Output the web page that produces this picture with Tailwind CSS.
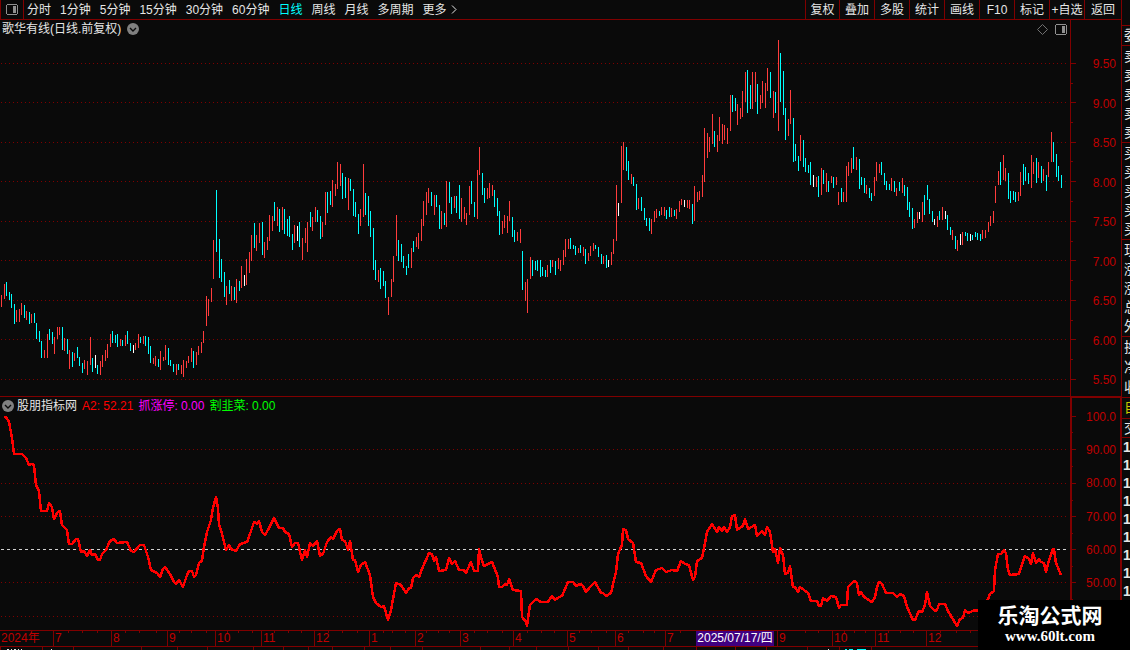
<!DOCTYPE html>
<html lang="zh-CN">
<head>
  <meta charset="UTF-8">
  <title>歌华有线 日线</title>
  <script src="https://cdn.jsdelivr.net/npm/@tailwindcss/browser@4"></script>
</head>
<body class="bg-[#0a0a0a] text-[#e6e6e6] text-[12px] leading-[18px] font-['Liberation_Sans','Noto_Sans_CJK_SC',sans-serif] overflow-hidden">
  <div class="flex h-screen">
    <main class="flex-1 min-w-0 grid grid-rows-[20px_376fr_234fr_17px_3px]">

      <!-- toolbar -->
      <nav class="flex justify-between border-b border-[#800000] whitespace-nowrap">
        <div class="flex">
          <button aria-label="侧栏" class="w-6 border-x border-[#800000] flex items-center justify-center">
            <svg width="12" height="11" viewBox="0 0 12 11" shape-rendering="crispEdges"><path d="M1 .5h10M1 10.5h10M.5 1v9M11.5 1v9" stroke="#909090"/><path d="M7 2h3v7H7z" fill="#909090"/></svg>
          </button>
          <div class="flex gap-[9px] pl-[3px]">
            <button>分时</button>
            <button>1分钟</button>
            <button>5分钟</button>
            <button>15分钟</button>
            <button>30分钟</button>
            <button>60分钟</button>
            <button class="text-[#00ffff]">日线</button>
            <button>周线</button>
            <button>月线</button>
            <button>多周期</button>
            <button class="flex items-center gap-1">更多
              <svg width="6" height="9" viewBox="0 0 6 9" fill="none" stroke="#e6e6e6"><path d="M1 .5l4 4-4 4"/></svg>
            </button>
          </div>
        </div>
        <div class="flex">
          <button class="w-[34px] border-l border-[#800000]">复权</button>
          <button class="w-[35px] border-l border-[#800000]">叠加</button>
          <button class="w-[35px] border-l border-[#800000]">多股</button>
          <button class="w-[35px] border-l border-[#800000]">统计</button>
          <button class="w-[35px] border-l border-[#800000]">画线</button>
          <button class="w-[35px] border-l border-[#800000]">F10</button>
          <button class="w-[35px] border-l border-[#800000]">标记</button>
          <button class="w-[35px] border-l border-[#800000]">+自选</button>
          <button class="w-[37px] border-l border-[#800000]">返回</button>
        </div>
      </nav>

      <!-- price pane -->
      <section class="relative flex min-h-0">
        <svg id="price" class="flex-1 min-w-0 h-full" viewBox="0 20 1070 376" preserveAspectRatio="none" shape-rendering="crispEdges" fill="none">
          <path d="M1 63.5H1068M1 102.5H1068M1 142.5H1068M1 181.5H1068M1 221.5H1068M1 260.5H1068M1 300.5H1068M1 339.5H1068M1 379.5H1068" stroke="#800000" stroke-dasharray="1 3"/>
        </svg>
        <div class="relative w-[51px] border-l border-[#800000]">
          <svg class="absolute inset-0 w-full h-full" viewBox="0 20 50 376" preserveAspectRatio="none" shape-rendering="crispEdges">
            <path d="M0 63.5h5M0 102.5h5M0 142.5h5M0 181.5h5M0 221.5h5M0 260.5h5M0 300.5h5M0 339.5h5M0 379.5h5M0 83.5h2M0 122.5h2M0 161.5h2M0 201.5h2M0 241.5h2M0 280.5h2M0 320.5h2M0 359.5h2" stroke="#800000"/>
          </svg>
          <div class="h-full flex flex-col justify-between items-end pt-[38px] pb-[10px] pr-[5px] leading-3 text-[#c00000]">
            <span>9.50</span><span>9.00</span><span>8.50</span><span>8.00</span><span>7.50</span><span>7.00</span><span>6.50</span><span>6.00</span><span>5.50</span>
          </div>
        </div>
        <div class="absolute left-0 right-[51px] top-0 flex items-center justify-between pl-[2px] pr-[3px]">
          <div class="flex items-center gap-[6px]">
            <h1>歌华有线(日线.前复权)</h1>
            <button aria-label="展开"><svg class="block" width="12" height="12" viewBox="0 0 12 12"><circle cx="6" cy="6" r="6" fill="#808080"/><path d="M3 5l3 3 3-3" fill="none" stroke="#0a0a0a" stroke-width="1.4"/></svg></button>
          </div>
          <div class="flex items-center gap-[7px]">
            <button aria-label="标记点"><svg class="block" width="11" height="11" viewBox="0 0 11 11"><path d="M5.5.5l5 5-5 5-5-5z" fill="none" stroke="#707070"/></svg></button>
            <button aria-label="面板"><svg class="block" width="12" height="11" viewBox="0 0 12 11" shape-rendering="crispEdges"><path d="M1 .5h10M1 10.5h10M.5 1v9M11.5 1v9" stroke="#909090"/><path d="M7 2h3v7H7z" fill="#909090"/></svg></button>
          </div>
        </div>
      </section>

      <!-- indicator pane -->
      <section class="relative flex min-h-0 border-t border-[#800000]">
        <svg class="flex-1 min-w-0 h-full" viewBox="0 397 1070 233" preserveAspectRatio="none" shape-rendering="crispEdges" fill="none">
          <path d="M1 449.5H1068M1 483.5H1068M1 516.5H1068M1 582.5H1068M1 616.5H1068" stroke="#800000" stroke-dasharray="1 3"/>
          <path d="M1 549.5H1066" stroke="#d0d0d0" stroke-dasharray="3 3"/>
          <polyline id="a2" stroke="#ff0000" stroke-width="2.5" stroke-linejoin="round"/>
        </svg>
        <div class="relative w-[51px] border-l-2 border-t border-r border-[#800000]">
          <svg class="absolute inset-0 w-full h-full" viewBox="0 398 48 232" preserveAspectRatio="none" shape-rendering="crispEdges">
            <path d="M0 416.5h4M0 449.5h4M0 483.5h4M0 516.5h4M0 549.5h4M0 582.5h4M0 432.5h1M0 466.5h1M0 500.5h1M0 533.5h1M0 566.5h1M0 599.5h1" stroke="#800000"/>
          </svg>
          <div class="h-full flex flex-col justify-between items-end pt-[13px] pb-[41px] pr-1 leading-3 text-[#c00000]">
            <span>100.0</span><span>90.00</span><span>80.00</span><span>70.00</span><span>60.00</span><span>50.00</span>
          </div>
        </div>
        <div class="absolute left-[2px] top-0 flex items-center gap-[5px] whitespace-nowrap">
          <div class="flex items-center gap-[3px]">
            <button aria-label="展开指标"><svg class="block" width="12" height="12" viewBox="0 0 12 12"><circle cx="6" cy="6" r="6" fill="#808080"/><path d="M3 5l3 3 3-3" fill="none" stroke="#0a0a0a" stroke-width="1.4"/></svg></button>
            <h2>股朋指标网</h2>
          </div>
          <span class="text-[#ff0000]">A2: 52.21</span>
          <span class="text-[#ff00ff]">抓涨停: 0.00</span>
          <span class="text-[#00ff00]">割韭菜: 0.00</span>
        </div>
      </section>

      <!-- date axis -->
      <div class="flex border-y border-[#800000] text-[#c00000] leading-[15px]">
        <div class="relative flex-1 min-w-0">
          <svg id="ticks" class="absolute inset-0 w-full h-full" viewBox="0 0 1070 15" preserveAspectRatio="none" shape-rendering="crispEdges"></svg>
          <div id="months" class="flex h-full"></div>
        </div>
        <div class="w-[51px]"></div>
      </div>

      <!-- index bar, mostly below the fold -->
      <footer class="relative overflow-hidden">
        <svg class="absolute inset-0 w-full h-full" viewBox="0 0 1121 3" preserveAspectRatio="none" shape-rendering="crispEdges">
          <path d="M.5 0v3M42.5 0v3M73.5 0v3M141.5 0v3M177.5 0v3M207.5 0v3M253.5 0v3M283.5 0v3M308.5 0v3M332.5 0v3M364.5 0v3M390.5 0v3M422.5 0v3M480.5 0v3M509.5 0v3M536.5 0v3M568.5 0v3M598.5 0v3M628.5 0v3M663.5 0v3M696.5 0v3M735.5 0v3M766.5 0v3M807.5 0v3M839.5 0v3M871.5 0v3" stroke="#800000"/>
          <path d="M7 2.5h2M11 2.5h1M14 2.5h2M18 2.5h1M21 2.5h1M51 2.5h1M828 2.5h1" stroke="#e6e6e6"/>
          <path d="M845 2.5h2M849 2.5h4M857 2.5h9" stroke="#00ffff"/>
        </svg>
      </footer>
    </main>

    <!-- quote panel, cut off by the window edge -->
    <aside class="w-[9px] h-screen shrink-0 overflow-hidden border-l border-[#800000] text-[14px] whitespace-nowrap grid grid-rows-[25px_20px_97fr_97fr_97fr_61fr_21px_19px_213fr]">
      <div></div>
      <div class="border-t border-[#800000] pl-[2px]">委比</div>
      <div class="border-t border-[#800000] pl-[2px] flex flex-col justify-around"><span>卖五</span><span>卖四</span><span>卖三</span><span>卖二</span><span>卖一</span></div>
      <div class="border-t border-[#800000] pl-[2px] flex flex-col justify-around"><span>买一</span><span>买二</span><span>买三</span><span>买四</span><span>买五</span></div>
      <div class="border-t border-[#800000] pl-[2px] flex flex-col justify-around"><span>现价</span><span>涨跌</span><span>涨幅</span><span>总量</span><span>外盘</span></div>
      <div class="border-t border-[#800000] pl-[2px] flex flex-col justify-around"><span>换手</span><span>净资</span><span>收益</span></div>
      <div class="border-t border-[#800000] pl-[2px] text-[#c8c800]">自选</div>
      <div class="border-t border-[#800000] pl-[2px]">交易</div>
      <div class="border-t border-[#800000] pl-px flex flex-col font-bold">
        <span>1</span><span>1</span><span>1</span><span>1</span><span>1</span><span>1</span><span>1</span><span>1</span><span>1</span>
      </div>
    </aside>
  </div>

  <a href="#" class="fixed right-0 bottom-0 w-[152px] h-[50px] pr-2 bg-black text-white font-bold flex flex-col items-center justify-center">
    <span class="text-[21px] leading-[22px]">乐淘公式网</span>
    <span class="font-['Liberation_Serif',serif] text-[15px] leading-[18px]">www.60lt.com</span>
  </a>

  <script>
    // x, high, low for each day; r = up, c = down, w = flat
    const bars = `r1,295,307 r4,284,299 c6,282,296 c9,292,300 c11,294,308 c14,304,324 r16,310,322 r19,309,322 r21,303,315 c24,305,318
      r26,311,320 c29,312,324 r31,314,323 c34,313,323 c36,323,339 c39,331,342 c41,341,358 r44,350,358 r47,334,358 c49,329,340
      c52,332,344 r54,337,354 r57,327,339 r59,327,335 c62,327,350 r64,338,351 c67,339,354 r69,350,369 c72,352,367 r74,353,361
      c77,347,358 c79,357,366 c82,363,373 r84,360,369 r87,361,375 r90,337,365 c92,358,372 w95,355,368 c97,365,374 r100,361,375
      r102,355,367 r105,350,361 r107,344,358 r110,334,347 c112,331,343 c115,335,343 c117,334,347 r120,339,346 c122,340,346 r125,335,346
      c127,331,344 c130,343,351 w133,345,353 r135,343,350 r138,334,348 c140,337,343 r143,336,344 c145,336,346 c148,337,354 c150,346,363
      r153,358,364 r155,356,366 c158,359,367 r160,351,370 r163,357,361 r165,345,360 c168,348,365 c170,360,366 c173,364,372 r176,364,375
      c178,364,370 r181,365,374 r183,360,377 r186,361,368 r188,356,363 r191,348,362 c193,351,368 r196,352,365 r198,346,355 r201,342,353
      r203,331,343 r206,296,326 r208,299,316 r211,288,302 r213,240,279 c216,190,252 c219,239,278 c221,259,282 c224,272,297 r226,286,305
      c229,280,294 r231,286,301 c234,287,300 r236,279,303 c239,281,291 r241,266,288 w244,275,286 r246,259,285 r249,252,273 r251,235,261
      c254,223,248 r256,235,251 r259,223,243 c262,222,255 r264,242,258 r267,237,250 r269,215,241 r272,216,231 c274,202,221 r277,207,226
      c279,209,232 r282,207,230 c284,209,234 c287,219,236 c289,216,237 c292,234,250 r294,225,243 w297,226,241 c299,222,247 r302,238,260
      r305,228,243 r307,222,252 c310,212,227 r312,217,231 r315,207,222 c317,210,222 c320,216,239 r322,222,237 r325,192,225 c327,192,213
      c330,191,205 r332,180,207 r335,184,196 r337,162,189 r340,164,186 c342,173,199 c345,177,198 r348,178,210 c350,179,191 c353,189,216
      c355,202,217 c358,214,234 r360,209,226 r363,164,217 c365,193,215 c368,196,226 c370,211,237 c373,228,270 c375,260,280 r378,270,282
      c380,268,289 c383,271,286 c385,281,298 r388,297,315 r391,279,297 r393,256,282 r396,215,256 c398,240,261 c401,244,262 c403,256,268
      c406,266,275 c408,254,268 r411,248,268 c413,241,252 r416,237,247 r418,233,249 r421,219,241 r423,201,226 r426,192,215 r428,188,203
      c431,192,206 r434,195,215 c436,195,207 c439,205,229 r441,211,229 c444,213,225 r446,181,227 c449,182,203 c451,197,214 r454,196,208
      c456,196,213 c459,185,219 r461,198,222 r464,207,219 r466,213,225 r469,186,215 c471,181,204 c474,202,217 r477,170,219 r479,147,175
      c482,173,195 c484,188,203 r487,188,199 r489,183,198 r492,185,196 c494,190,207 c497,198,216 c499,211,235 r502,221,234 r504,215,228
      r507,216,233 r509,201,221 c512,217,237 c514,230,242 r517,232,241 r520,229,243 c522,251,290 r525,282,301 r527,279,313 r530,257,279
      c532,260,276 c535,261,270 c537,260,271 c540,260,277 c542,267,276 c545,270,277 r547,265,277 c550,260,273 r552,260,267 c555,261,275
      r558,258,269 r560,260,271 r563,250,265 r565,239,257 r568,239,249 c570,238,249 c573,245,249 c575,246,255 r578,248,253 c580,245,253
      r583,247,256 c585,249,264 r588,253,261 r590,246,256 r593,243,251 c595,245,249 c598,247,257 c601,254,264 r603,256,264 c606,255,268
      w608,260,267 r611,252,265 r613,239,254 r616,185,241 w618,203,216 r621,146,203 r623,142,170 c626,147,171 c628,161,180 r631,174,184
      c633,177,186 c636,184,210 r638,198,209 c641,197,211 c644,208,220 c646,218,226 c649,218,231 r651,219,234 r654,211,222 r656,209,218
      c659,211,216 r661,207,215 r664,207,216 c666,210,219 c669,207,217 r671,208,217 c674,210,216 r676,209,219 r679,201,212 r681,199,205
      w684,200,207 r687,200,208 r689,200,209 c692,204,224 r694,186,221 r697,192,202 r699,191,200 r702,175,197 r704,128,182 r707,133,158
      r709,137,152 r712,114,144 c714,131,147 r717,135,152 r719,117,141 r722,124,144 r724,125,140 r727,128,144 r730,95,131 c732,95,112
      c735,98,111 r737,104,125 r740,108,119 r742,91,117 r745,72,102 c747,70,113 c750,85,109 r752,72,109 r755,72,102 c757,84,114
      r760,95,109 r762,81,103 r765,83,108 r767,68,91 c770,72,98 r773,91,118 c775,92,113 r778,40,131 c780,53,102 c783,71,115
      c785,108,140 r788,119,136 r790,90,124 c793,118,162 c795,144,161 c798,156,171 r800,135,161 c803,140,167 c805,158,172 c808,165,173
      c810,162,185 w813,175,187 r816,177,187 c818,176,197 r821,168,195 c823,170,184 r826,173,192 c828,181,192 r831,176,183 c833,177,188
      r836,177,185 r838,192,205 c841,188,202 r843,192,202 r846,166,202 r848,162,176 r851,158,173 c853,147,169 r856,157,170 c859,159,189
      c861,177,185 c864,178,193 r866,185,194 c869,188,198 c871,193,201 r874,177,196 r876,162,181 r879,164,173 c881,162,175 c884,173,185
      c886,181,190 c889,184,190 r891,178,191 c894,181,192 r896,188,196 c899,182,191 r902,178,193 c904,185,196 c907,187,210 c909,202,217
      c912,208,229 r914,219,228 r917,212,223 w919,212,219 r922,202,222 c924,195,215 c927,185,200 c929,199,214 c932,211,222 w934,219,225
      r937,216,227 c939,211,220 r942,207,220 w945,211,219 c947,215,230 c950,227,235 r952,230,240 c955,236,249 r957,240,251 w960,234,245
      r962,232,245 c965,232,236 c967,233,241 w970,234,241 c972,235,240 c975,232,237 c977,233,240 c980,234,241 r982,230,239 r985,230,238
      r988,222,232 r990,216,226 r993,211,223 r995,186,203 r998,171,185 c1000,162,185 r1003,155,180 r1005,168,181 c1008,173,199 c1010,191,203
      c1013,191,200 c1015,192,202 r1018,192,201 r1020,172,196 c1023,164,185 c1025,167,181 c1028,173,184 r1031,155,188 r1033,162,174 c1036,158,183
      r1038,162,178 c1041,166,183 r1043,169,181 c1046,175,191 r1048,162,177 r1051,132,162 c1053,142,162 c1056,154,177 c1058,166,181 c1061,175,188`;

    const a2 = `4,417 6,417 9,422 12,438 14,454 22,454 26,458 29,465 32,464 34,465 36,485 39,491 41,511 47,511 49,503 52,507 54,519 57,513 60,511 62,525
      67,530 69,544 72,544 76,539 78,539 81,552 84,551 87,556 90,550 92,555 95,554 98,560 100,560 102,554 106,550 110,541 114,539 117,543 127,542 131,551
      134,552 140,545 144,545 148,557 151,570 157,573 160,577 163,569 165,567 170,574 174,582 176,584 179,580 183,587 187,575 189,571 192,571 194,577 196,575 199,563
      202,561 204,547 207,532 211,520 213,508 216,497 218,508 219,525 221,530 224,542 226,550 229,545 231,549 236,551 240,544 247,542 250,534 254,522 257,524 259,521
      262,532 265,535 269,528 274,518 279,528 283,528 285,532 289,534 292,547 295,543 298,543 302,560 305,550 307,557 310,543 313,546 317,541 320,556 323,554 327,542
      331,537 333,539 337,531 340,529 342,540 345,541 348,550 350,541 353,560 355,560 358,572 361,565 365,562 370,575 373,597 376,603 381,607 384,606 388,620 391,610
      396,583 401,585 406,593 409,588 411,588 413,578 416,575 419,577 422,569 429,553 432,554 434,561 436,557 439,571 446,570 449,558 452,564 455,561 459,570 464,570
      466,573 471,562 474,571 478,571 479,549 482,561 484,566 492,562 498,577 499,587 502,587 505,584 507,585 509,579 513,590 521,591 522,617 526,622 527,626 530,605
      536,599 541,602 548,602 552,596 555,600 559,597 562,596 568,582 573,582 576,586 580,584 583,586 586,592 590,587 595,582 601,593 603,593 606,596 611,593 614,580
      616,572 618,554 622,545 623,529 626,530 628,539 633,543 636,562 641,563 646,576 651,582 656,570 662,568 666,572 672,570 677,571 681,561 685,564 689,565 693,580
      695,577 697,561 702,558 705,543 707,532 712,524 717,532 719,527 722,531 724,527 727,532 730,527 732,516 735,515 737,530 743,526 745,519 748,529 755,525 757,536
      762,531 765,535 767,527 770,532 773,552 775,549 778,563 780,548 783,555 785,574 788,573 790,566 793,587 795,587 798,592 800,587 808,593 811,601 817,601 819,606
      821,606 823,598 827,601 831,596 836,597 839,608 841,605 847,605 848,587 854,581 857,583 859,595 861,592 864,597 872,602 875,597 877,587 879,582 882,584 886,593
      893,593 897,597 900,594 904,596 907,607 913,620 915,620 919,611 922,612 925,605 927,592 930,606 935,611 937,610 939,604 945,604 948,611 957,626 960,619 963,618
      965,610 968,613 975,610 977,611 988,599 990,594 994,591 995,570 998,554 1001,554 1004,550 1006,553 1008,570 1010,575 1019,574 1023,561 1025,556 1029,559 1031,564 1033,553
      1036,563 1039,559 1041,562 1044,563 1046,572 1049,560 1053,549 1054,549 1056,563 1061,575`;

    const NS = 'http://www.w3.org/2000/svg';
    const addPath = (id, d, color) => {
      const path = document.createElementNS(NS, 'path');
      path.setAttribute('d', d);
      path.setAttribute('stroke', color);
      document.getElementById(id).appendChild(path);
    };

    const paths = { r: '', c: '', w: '' };
    bars.split(/\s+/).forEach((bar) => {
      const [x, high, low] = bar.slice(1).split(',');
      paths[bar[0]] += `M${x}.5 ${high}V${low}`;
    });
    addPath('price', paths.r, '#ff3c3c');
    addPath('price', paths.c, '#00ffff');
    addPath('price', paths.w, '#ffffff');
    document.getElementById('a2').setAttribute('points', a2);

    const ticks = [68, 82, 97, 125, 139, 156, 179, 191, 206, 227, 238, 252, 274, 288, 301, 328, 342, 357, 383, 392, 405, 426, 438, 449, 474, 487, 502,
      527, 541, 554, 579, 591, 606, 628, 643, 654, 680, 805, 818, 844, 854, 865, 888, 900, 913, 940, 956, 970];
    addPath('ticks', ticks.map((x) => `M${x}.5 0v2`).join(''), '#800000');

    // label and width share (of 1070) of each month
    const months = [['2024年', 53], ['7', 58], ['8', 56], ['9', 48], ['10', 46], ['11', 53], ['12', 55], ['1', 46], ['2', 45], ['3', 53], ['4', 54],
      ['5', 48], ['6', 50], ['7', 112], ['9', 55], ['10', 43], ['11', 51], ['12', 144]];
    months.forEach(([label, share], i) => {
      const cell = document.createElement('div');
      cell.className = i ? 'relative shrink-0 border-l border-[#800000] pl-px' : 'shrink-0 pl-px whitespace-nowrap';
      cell.style.width = `${share / 10.7}%`;
      cell.textContent = label;
      if (share === 112) {
        cell.insertAdjacentHTML('beforeend', '<span class="absolute left-[30px] top-0 w-[78px] h-full bg-[#400080] text-white text-center whitespace-nowrap">2025/07/17/四</span>');
      }
      document.getElementById('months').appendChild(cell);
    });
  </script>
</body>
</html>
